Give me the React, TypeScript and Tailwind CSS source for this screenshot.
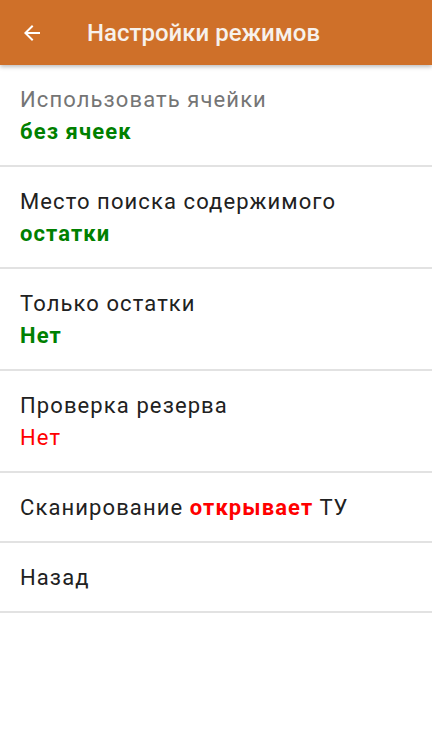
import React from 'react'

const font = { fontFamily: 'Roboto, "Noto Sans", sans-serif' }

function BackArrow() {
  return (
    <svg width="24" height="24" viewBox="0 0 24 24" className="fill-white">
      <path d="M20 11H7.83l5.59-5.59L12 4l-8 8 8 8 1.41-1.41L7.83 13H20v-2z" />
    </svg>
  )
}

function TwoLineRow({ title, value, titleClass, valueClass }: { title: string; value: string; titleClass: string; valueClass: string }) {
  return (
    <div className="flex h-[102px] flex-col justify-center border-b-2 border-[#e2e2e2] px-5 pt-[2px]">
      <div className={`text-[22px] leading-[32px] tracking-[1.1px] ${titleClass}`}>{title}</div>
      <div className={`text-[22px] leading-[32px] tracking-[1.1px] ${valueClass}`}>{value}</div>
    </div>
  )
}

export default function App() {
  return (
    <div className="min-h-[738px] w-full bg-white" style={font}>
      <header className="relative z-10 flex h-[65px] items-center bg-[#cf7029] shadow-[0_2px_4px_rgba(0,0,0,0.25)]">
        <div className="ml-5 flex h-6 w-6 items-center justify-center">
          <BackArrow />
        </div>
        <h1 className="ml-[43px] text-[24px] font-medium text-[#f7f1ec]">Настройки режимов</h1>
      </header>

      <div>
        <TwoLineRow title="Использовать ячейки" value="без ячеек" titleClass="text-[#757575]" valueClass="font-bold text-[#008000]" />
        <TwoLineRow title="Место поиска содержимого" value="остатки" titleClass="text-[#212121]" valueClass="font-bold text-[#008000]" />
        <TwoLineRow title="Только остатки" value="Нет" titleClass="text-[#212121]" valueClass="font-bold text-[#008000]" />
        <TwoLineRow title="Проверка резерва" value="Нет" titleClass="text-[#212121]" valueClass="text-[#ff0000]" />

        <div className="flex h-[70px] items-center border-b-2 border-[#e2e2e2] px-5 text-[22px] tracking-[1.1px] text-[#212121]">
          <span>
            Сканирование <span className="font-bold text-[#ff0000]">открывает</span> ТУ
          </span>
        </div>
        <div className="flex h-[70px] items-center border-b-2 border-[#e2e2e2] px-5 text-[22px] tracking-[1.1px] text-[#212121]">
          Назад
        </div>
      </div>
    </div>
  )
}
